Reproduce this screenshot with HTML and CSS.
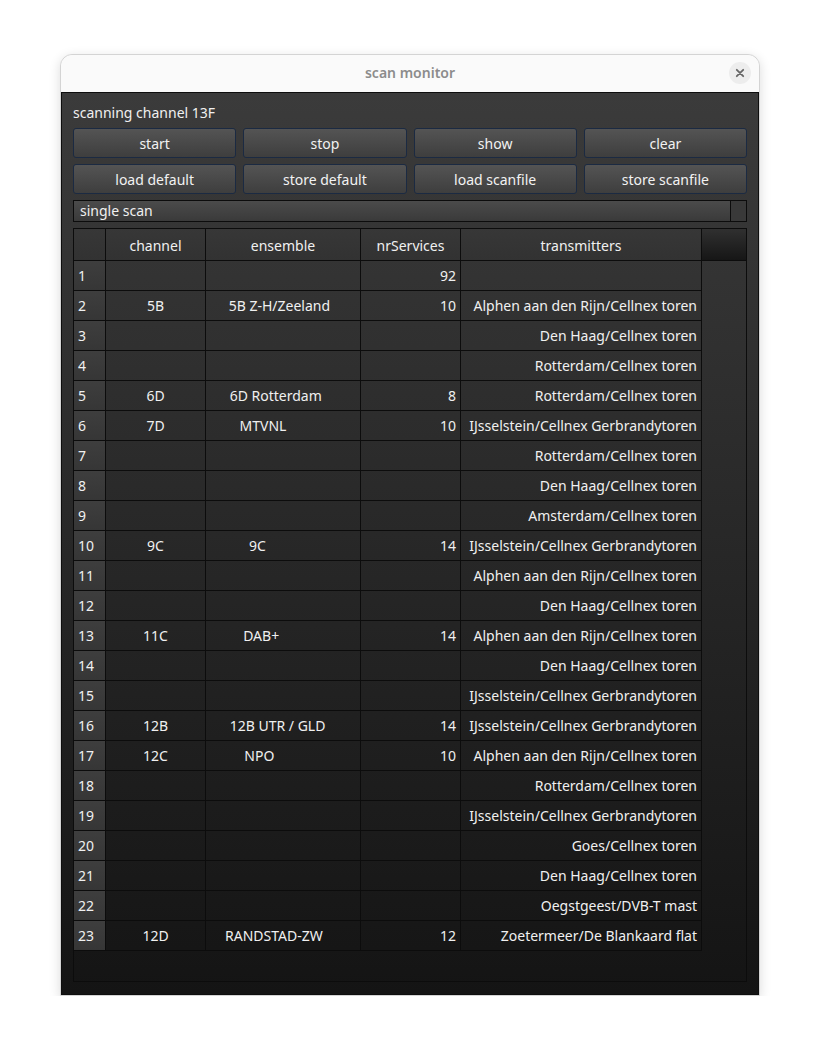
FILE: index.html
```html
<!DOCTYPE html>
<html>
<head>
<meta charset="utf-8">
<link rel="stylesheet" href="styles.css">
</head>
<body>
<div class="window">
  <div class="titlebar">
    <span class="title">scan monitor</span>
    <span class="close"><svg width="10" height="10" viewBox="0 0 10 10"><path d="M1.8 1.8 L8.2 8.2 M8.2 1.8 L1.8 8.2" stroke="#666666" stroke-width="1.8" stroke-linecap="round"/></svg></span>
  </div>
  <div class="content">
    <div class="status">scanning channel 13F</div>
    <div class="buttons">
      <div class="btn">start</div>
      <div class="btn">stop</div>
      <div class="btn">show</div>
      <div class="btn">clear</div>
    </div>
    <div class="buttons">
      <div class="btn">load default</div>
      <div class="btn">store default</div>
      <div class="btn">load scanfile</div>
      <div class="btn">store scanfile</div>
    </div>
    <div class="combo"><span class="combo-text">single scan</span><span class="combo-arrow"></span></div>
    <div class="table">
      <div class="hrow">
        <div class="hcell corner"></div>
        <div class="hcell">channel</div>
        <div class="hcell">ensemble</div>
        <div class="hcell">nrServices</div>
        <div class="hcell">transmitters</div>
        <div class="hfill"></div>
      </div>
      <div class="row"><div class="rh">1</div><div class="c"></div><div class="c ens"></div><div class="c num">92</div><div class="c tx"></div></div>
      <div class="row"><div class="rh">2</div><div class="c">5B</div><div class="c ens">5B Z-H/Zeeland  </div><div class="c num">10</div><div class="c tx">Alphen aan den Rijn/Cellnex toren</div></div>
      <div class="row"><div class="rh">3</div><div class="c"></div><div class="c ens"></div><div class="c num"></div><div class="c tx">Den Haag/Cellnex toren</div></div>
      <div class="row"><div class="rh">4</div><div class="c"></div><div class="c ens"></div><div class="c num"></div><div class="c tx">Rotterdam/Cellnex toren</div></div>
      <div class="row"><div class="rh">5</div><div class="c">6D</div><div class="c ens">6D Rotterdam    </div><div class="c num">8</div><div class="c tx">Rotterdam/Cellnex toren</div></div>
      <div class="row"><div class="rh">6</div><div class="c">7D</div><div class="c ens">MTVNL           </div><div class="c num">10</div><div class="c tx">IJsselstein/Cellnex Gerbrandytoren</div></div>
      <div class="row"><div class="rh">7</div><div class="c"></div><div class="c ens"></div><div class="c num"></div><div class="c tx">Rotterdam/Cellnex toren</div></div>
      <div class="row"><div class="rh">8</div><div class="c"></div><div class="c ens"></div><div class="c num"></div><div class="c tx">Den Haag/Cellnex toren</div></div>
      <div class="row"><div class="rh">9</div><div class="c"></div><div class="c ens"></div><div class="c num"></div><div class="c tx">Amsterdam/Cellnex toren</div></div>
      <div class="row"><div class="rh">10</div><div class="c">9C</div><div class="c ens">9C              </div><div class="c num">14</div><div class="c tx">IJsselstein/Cellnex Gerbrandytoren</div></div>
      <div class="row"><div class="rh">11</div><div class="c"></div><div class="c ens"></div><div class="c num"></div><div class="c tx">Alphen aan den Rijn/Cellnex toren</div></div>
      <div class="row"><div class="rh">12</div><div class="c"></div><div class="c ens"></div><div class="c num"></div><div class="c tx">Den Haag/Cellnex toren</div></div>
      <div class="row"><div class="rh">13</div><div class="c">11C</div><div class="c ens">DAB+            </div><div class="c num">14</div><div class="c tx">Alphen aan den Rijn/Cellnex toren</div></div>
      <div class="row"><div class="rh">14</div><div class="c"></div><div class="c ens"></div><div class="c num"></div><div class="c tx">Den Haag/Cellnex toren</div></div>
      <div class="row"><div class="rh">15</div><div class="c"></div><div class="c ens"></div><div class="c num"></div><div class="c tx">IJsselstein/Cellnex Gerbrandytoren</div></div>
      <div class="row"><div class="rh">16</div><div class="c">12B</div><div class="c ens">12B UTR / GLD   </div><div class="c num">14</div><div class="c tx">IJsselstein/Cellnex Gerbrandytoren</div></div>
      <div class="row"><div class="rh">17</div><div class="c">12C</div><div class="c ens">NPO             </div><div class="c num">10</div><div class="c tx">Alphen aan den Rijn/Cellnex toren</div></div>
      <div class="row"><div class="rh">18</div><div class="c"></div><div class="c ens"></div><div class="c num"></div><div class="c tx">Rotterdam/Cellnex toren</div></div>
      <div class="row"><div class="rh">19</div><div class="c"></div><div class="c ens"></div><div class="c num"></div><div class="c tx">IJsselstein/Cellnex Gerbrandytoren</div></div>
      <div class="row"><div class="rh">20</div><div class="c"></div><div class="c ens"></div><div class="c num"></div><div class="c tx">Goes/Cellnex toren</div></div>
      <div class="row"><div class="rh">21</div><div class="c"></div><div class="c ens"></div><div class="c num"></div><div class="c tx">Den Haag/Cellnex toren</div></div>
      <div class="row"><div class="rh">22</div><div class="c"></div><div class="c ens"></div><div class="c num"></div><div class="c tx">Oegstgeest/DVB-T mast</div></div>
      <div class="row"><div class="rh">23</div><div class="c">12D</div><div class="c ens">RANDSTAD-ZW     </div><div class="c num">12</div><div class="c tx">Zoetermeer/De Blankaard flat</div></div>
    </div>
  </div>
</div>
</body>
</html>
```

FILE: styles.css
```css
html, body {
  margin: 0;
  padding: 0;
  background: #ffffff;
}
body {
  padding: 54px 0 0 60px;
  font-family: "Noto Sans", "Open Sans", sans-serif;
  font-size: 14px;
  color: #f0f0f0;
}
.window {
  width: 700px;
  box-sizing: border-box;
  border: 1px solid #d4d4d4;
  border-radius: 12px 12px 0 0;
  box-shadow: 0 3px 12px rgba(0, 0, 0, 0.14);
  background: #fafafa;
}
.titlebar {
  height: 37px;
  display: flex;
  align-items: center;
  justify-content: center;
  position: relative;
  border-radius: 12px 12px 0 0;
  background: #fafafa;
}
.title {
  color: #8c8c8c;
  font-weight: 600;
  font-size: 14px;
  margin-top: -2px;
}
.close {
  position: absolute;
  right: 8px;
  top: 7px;
  width: 22px;
  height: 22px;
  border-radius: 50%;
  background: #ededed;
  display: flex;
  align-items: center;
  justify-content: center;
}
.content {
  border: 1px solid #0e0e0e;
  background: linear-gradient(#3b3b3b, #141414);
  padding: 11px 11px 12px 11px;
  display: flex;
  flex-direction: column;
}
.status {
  height: 18px;
  line-height: 18px;
  margin-bottom: 6px;
}
.buttons {
  display: grid;
  grid-template-columns: repeat(4, 1fr);
  column-gap: 7px;
  margin-bottom: 6px;
}
.btn {
  height: 30px;
  box-sizing: border-box;
  border: 1px solid #1b2a42;
  border-radius: 3px;
  background: linear-gradient(#545454, #3e3e3e);
  display: flex;
  align-items: center;
  justify-content: center;
  color: #f2f2f2;
}
.combo {
  height: 22px;
  box-sizing: border-box;
  border: 1px solid #0c0c0c;
  background: linear-gradient(#4b4b4b, #3a3a3a);
  display: flex;
  margin-bottom: 6px;
}
.combo-text {
  flex: 1;
  padding-left: 6px;
  line-height: 20px;
}
.combo-arrow {
  width: 15px;
  border-left: 1px solid #0c0c0c;
  background: #393939;
}
.table {
  height: 754px;
  box-sizing: border-box;
  border: 1px solid #0c0c0c;
}
.hrow {
  display: grid;
  grid-template-columns: 32px 100px 155px 100px 241px 1fr;
  height: 32px;
}
.hcell {
  box-sizing: border-box;
  border-right: 1px solid #0c0c0c;
  border-bottom: 1px solid #0c0c0c;
  background: linear-gradient(#373737, #323232);
  display: flex;
  align-items: center;
  justify-content: center;
  padding-top: 2px;
}
.hfill {
  border-bottom: 1px solid #0c0c0c;
  background: linear-gradient(#303030, #161616);
}
.row {
  display: grid;
  grid-template-columns: 32px 100px 155px 100px 241px;
  height: 30px;
}
.rh, .c {
  box-sizing: border-box;
  border-right: 1px solid #0c0c0c;
  border-bottom: 1px solid #0c0c0c;
  display: flex;
  align-items: center;
  justify-content: center;
  white-space: pre;
  overflow: hidden;
}
.rh {
  justify-content: flex-start;
  padding-left: 4px;
  background: linear-gradient(#3e3e3e, #363636);
}
.num, .tx {
  justify-content: flex-end;
  padding-right: 4px;
}
```
